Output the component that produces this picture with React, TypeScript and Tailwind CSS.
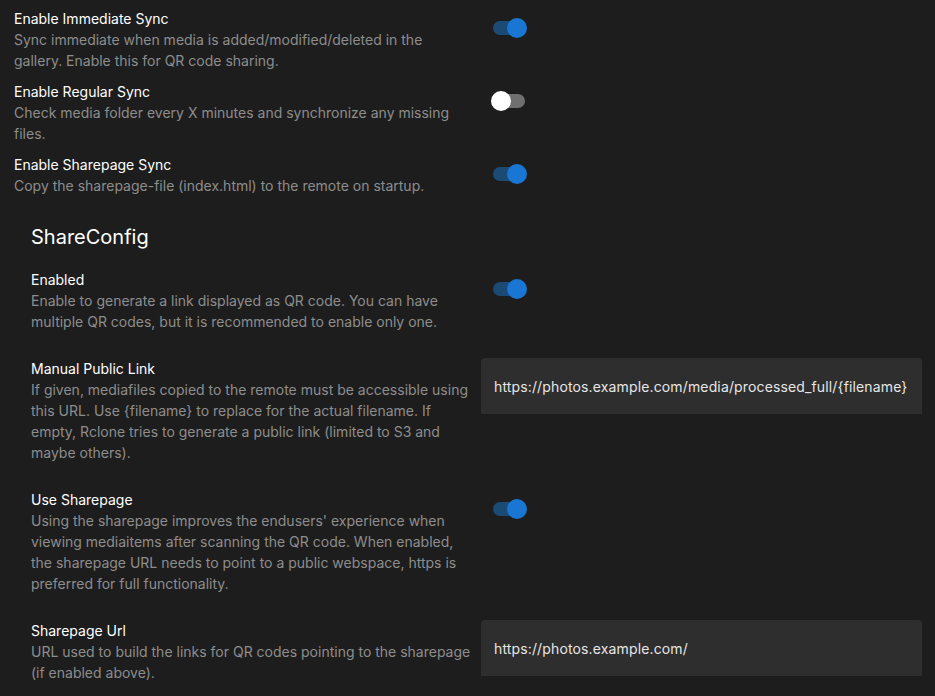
import React, { useState } from "react";

type ToggleProps = { on: boolean; onChange: (v: boolean) => void };

function Toggle({ on, onChange }: ToggleProps) {
  return (
    <div className="flex h-10 items-center pl-[10px]">
      <button
        type="button"
        onClick={() => onChange(!on)}
        className="relative h-[20px] w-[36px] cursor-pointer"
      >
        <span
          className={`absolute left-[2px] right-[2px] top-[3px] h-[14px] rounded-full ${
            on ? "bg-[#1b4b75]" : "bg-[#6f6f6f]"
          }`}
        />
        <span
          className={`absolute top-0 h-[20px] w-[20px] rounded-full ${
            on ? "right-0 bg-[#1976d2]" : "left-0 bg-white"
          }`}
        />
      </button>
    </div>
  );
}

function Label({ title, desc }: { title: string; desc: string }) {
  return (
    <div className="pr-[10px] text-[14px] leading-[21px]">
      <div className="text-white">{title}</div>
      <div className="text-[#8d8d8d]">{desc}</div>
    </div>
  );
}

function TextField({ value }: { value: string }) {
  return (
    <div className="flex h-14 items-center rounded-t-[4px] bg-[#2e2e2e] px-[13px] text-[14px] tracking-[0.14px] text-[#e6e6e6]">
      {value}
    </div>
  );
}

export default function App() {
  const [immediate, setImmediate] = useState(true);
  const [regular, setRegular] = useState(false);
  const [sharepageSync, setSharepageSync] = useState(true);
  const [enabled, setEnabled] = useState(true);
  const [useSharepage, setUseSharepage] = useState(true);

  return (
    <div
      className="h-[696px] overflow-hidden bg-[#1d1d1d] pt-[8px]"
      style={{ fontFamily: "Inter, 'Noto Sans', sans-serif" }}
    >
      {/* sync settings */}
      <div className="flex flex-col gap-[10px]">
        <div className="grid grid-cols-[467px_441px] pl-[14px]">
          <Label
            title="Enable Immediate Sync"
            desc="Sync immediate when media is added/modified/deleted in the gallery. Enable this for QR code sharing."
          />
          <Toggle on={immediate} onChange={setImmediate} />
        </div>
        <div className="grid grid-cols-[467px_441px] pl-[14px]">
          <Label
            title="Enable Regular Sync"
            desc="Check media folder every X minutes and synchronize any missing files."
          />
          <Toggle on={regular} onChange={setRegular} />
        </div>
        <div className="grid grid-cols-[467px_441px] pl-[14px]">
          <Label
            title="Enable Sharepage Sync"
            desc="Copy the sharepage-file (index.html) to the remote on startup."
          />
          <Toggle on={sharepageSync} onChange={setSharepageSync} />
        </div>
      </div>

      {/* share config */}
      <div className="mt-[25px] pl-[31px]">
        <h2 className="text-[20px] leading-[32px] text-white">ShareConfig</h2>
        <div className="mt-[16px] flex flex-col gap-[26px]">
          <div className="grid grid-cols-[450px_441px]">
            <Label
              title="Enabled"
              desc="Enable to generate a link displayed as QR code. You can have multiple QR codes, but it is recommended to enable only one."
            />
            <Toggle on={enabled} onChange={setEnabled} />
          </div>
          <div className="grid grid-cols-[450px_441px]">
            <Label
              title="Manual Public Link"
              desc="If given, mediafiles copied to the remote must be accessible using this URL. Use {filename} to replace for the actual filename. If empty, Rclone tries to generate a public link (limited to S3 and maybe others)."
            />
            <TextField value="https://photos.example.com/media/processed_full/{filename}" />
          </div>
          <div className="grid grid-cols-[450px_441px]">
            <Label
              title="Use Sharepage"
              desc="Using the sharepage improves the endusers' experience when viewing mediaitems after scanning the QR code. When enabled, the sharepage URL needs to point to a public webspace, https is preferred for full functionality."
            />
            <Toggle on={useSharepage} onChange={setUseSharepage} />
          </div>
          <div className="grid grid-cols-[450px_441px]">
            <Label
              title="Sharepage Url"
              desc="URL used to build the links for QR codes pointing to the sharepage (if enabled above)."
            />
            <TextField value="https://photos.example.com/" />
          </div>
        </div>
      </div>
    </div>
  );
}
